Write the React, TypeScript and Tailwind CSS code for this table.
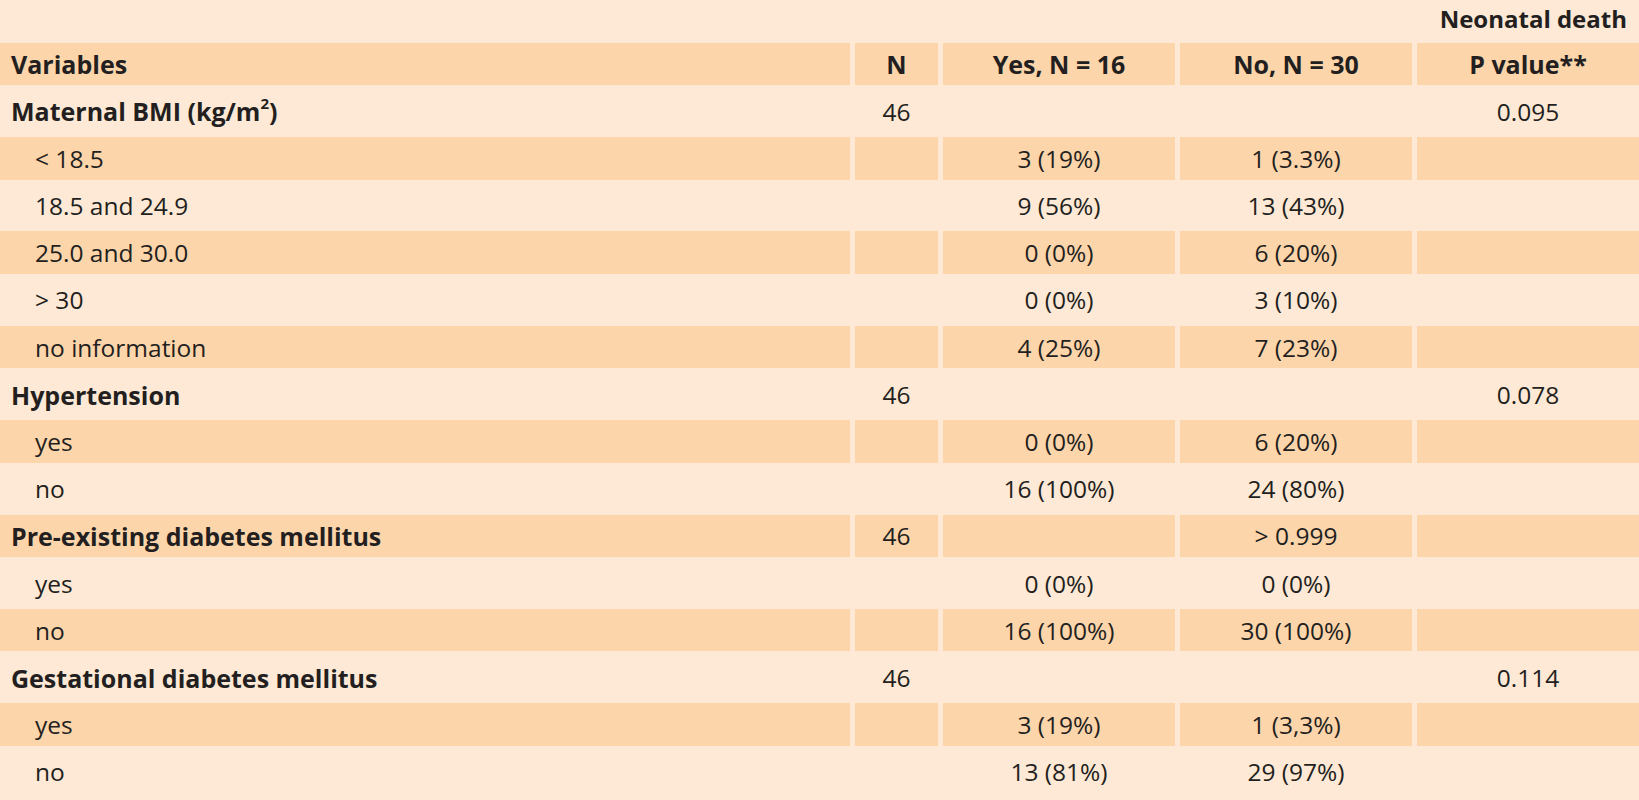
import React from "react";

type Row = {
  label: string;
  n?: string;
  yes?: string;
  no?: string;
  p?: string;
  bold?: boolean;
  dark?: boolean;
  sup?: boolean;
};

const rows: Row[] = [
  { label: "Maternal BMI (kg/m", sup: true, n: "46", p: "0.095", bold: true },
  { label: "< 18.5", yes: "3 (19%)", no: "1 (3.3%)", dark: true },
  { label: "18.5 and 24.9", yes: "9 (56%)", no: "13 (43%)" },
  { label: "25.0 and 30.0", yes: "0 (0%)", no: "6 (20%)", dark: true },
  { label: "> 30", yes: "0 (0%)", no: "3 (10%)" },
  { label: "no information", yes: "4 (25%)", no: "7 (23%)", dark: true },
  { label: "Hypertension", n: "46", p: "0.078", bold: true },
  { label: "yes", yes: "0 (0%)", no: "6 (20%)", dark: true },
  { label: "no", yes: "16 (100%)", no: "24 (80%)" },
  { label: "Pre-existing diabetes mellitus", n: "46", no: "> 0.999", bold: true, dark: true },
  { label: "yes", yes: "0 (0%)", no: "0 (0%)" },
  { label: "no", yes: "16 (100%)", no: "30 (100%)", dark: true },
  { label: "Gestational diabetes mellitus", n: "46", p: "0.114", bold: true },
  { label: "yes", yes: "3 (19%)", no: "1 (3,3%)", dark: true },
  { label: "no", yes: "13 (81%)", no: "29 (97%)" },
];

export default function App() {
  const cell = "h-[42.5px] flex items-center leading-none pt-[1.5px]";
  const head = "text-[25px] font-bold";
  return (
    <div
      className="w-[1639px] h-[800px] bg-[#fde9d6] text-[#231f20] overflow-hidden"
      style={{ fontFamily: '"Open Sans", "Noto Sans", sans-serif' }}
    >
      <div className="h-[42.7px] flex items-center justify-end pr-[12px] pb-[5px] text-[24px] font-bold leading-none">
        Neonatal death
      </div>
      <div className="grid grid-cols-[850px_83px_232px_232px_222px] gap-x-[5px] gap-y-[4.7px] text-[24.5px]">
        <div className={`${cell} ${head} bg-[#fdd5ab] pl-[11px]`}>Variables</div>
        <div className={`${cell} ${head} bg-[#fdd5ab] justify-center`}>N</div>
        <div className={`${cell} ${head} bg-[#fdd5ab] justify-center`}>Yes, N = 16</div>
        <div className={`${cell} ${head} bg-[#fdd5ab] justify-center`}>No, N = 30</div>
        <div className={`${cell} ${head} bg-[#fdd5ab] justify-center`}>P value**</div>
        {rows.map((r, i) => {
          const bg = r.dark ? "bg-[#fdd5ab]" : "";
          return (
            <React.Fragment key={i}>
              <div
                className={`${cell} ${bg} ${
                  r.bold ? "pl-[11px] text-[25px] font-bold" : "pl-[35px]"
                }`}
              >
                {r.label}
                {r.sup && (
                  <>
                    <span className="text-[15px] relative -top-[8px]">2</span>)
                  </>
                )}
              </div>
              <div className={`${cell} ${bg} justify-center`}>{r.n}</div>
              <div className={`${cell} ${bg} justify-center`}>{r.yes}</div>
              <div className={`${cell} ${bg} justify-center`}>{r.no}</div>
              <div className={`${cell} ${bg} justify-center`}>{r.p}</div>
            </React.Fragment>
          );
        })}
      </div>
    </div>
  );
}
